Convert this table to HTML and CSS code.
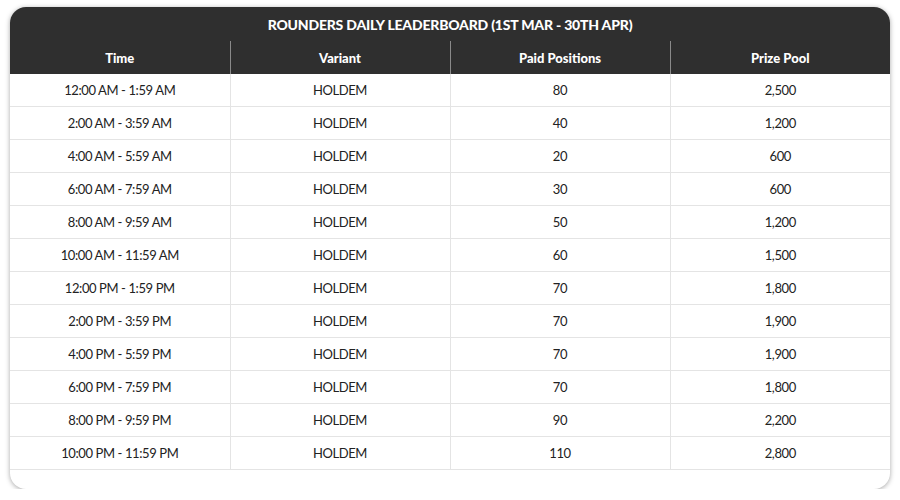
FILE: index.html
```html
<!DOCTYPE html>
<html>
<head>
<meta charset="utf-8">
<link rel="stylesheet" href="styles.css">
</head>
<body>
<div class="card">
  <table class="board">
    <thead>
      <tr class="title-row"><th colspan="4">ROUNDERS DAILY LEADERBOARD (1ST MAR - 30TH APR)</th></tr>
      <tr class="head-row"><th>Time</th><th>Variant</th><th>Paid Positions</th><th>Prize Pool</th></tr>
    </thead>
    <tbody>
      <tr><td>12:00 AM - 1:59 AM</td><td>HOLDEM</td><td>80</td><td>2,500</td></tr>
      <tr><td>2:00 AM - 3:59 AM</td><td>HOLDEM</td><td>40</td><td>1,200</td></tr>
      <tr><td>4:00 AM - 5:59 AM</td><td>HOLDEM</td><td>20</td><td>600</td></tr>
      <tr><td>6:00 AM - 7:59 AM</td><td>HOLDEM</td><td>30</td><td>600</td></tr>
      <tr><td>8:00 AM - 9:59 AM</td><td>HOLDEM</td><td>50</td><td>1,200</td></tr>
      <tr><td>10:00 AM - 11:59 AM</td><td>HOLDEM</td><td>60</td><td>1,500</td></tr>
      <tr><td>12:00 PM - 1:59 PM</td><td>HOLDEM</td><td>70</td><td>1,800</td></tr>
      <tr><td>2:00 PM - 3:59 PM</td><td>HOLDEM</td><td>70</td><td>1,900</td></tr>
      <tr><td>4:00 PM - 5:59 PM</td><td>HOLDEM</td><td>70</td><td>1,900</td></tr>
      <tr><td>6:00 PM - 7:59 PM</td><td>HOLDEM</td><td>70</td><td>1,800</td></tr>
      <tr><td>8:00 PM - 9:59 PM</td><td>HOLDEM</td><td>90</td><td>2,200</td></tr>
      <tr><td>10:00 PM - 11:59 PM</td><td>HOLDEM</td><td>110</td><td>2,800</td></tr>
    </tbody>
  </table>
</div>
</body>
</html>
```
FILE: styles.css
```css
html, body {
  margin: 0;
  padding: 0;
  background: #ffffff;
}
body {
  padding: 7px 10px 0 10px;
  font-family: Lato, "Liberation Sans", sans-serif;
}
.card {
  width: 880px;
  height: 482px;
  box-sizing: border-box;
  background: #ffffff;
  border-radius: 16px;
  overflow: hidden;
  box-shadow: 0 1px 5px rgba(0, 0, 0, 0.35);
}
.board {
  width: 100%;
  border-collapse: collapse;
  table-layout: fixed;
}
.board th {
  background: #2f2f2f;
  color: #ffffff;
  font-weight: 900;
  font-size: 13px;
  padding: 0;
}
.title-row th {
  height: 34px;
  font-size: 14px;
  letter-spacing: -0.2px;
}
.head-row th {
  height: 33px;
  border-left: 1px solid #8a8a8a;
}
.head-row th:first-child {
  border-left: none;
}
.board td {
  height: 32px;
  padding: 0;
  text-align: center;
  font-size: 13px;
  letter-spacing: -0.4px;
  color: #222222;
  border-bottom: 1px solid #e4e4e4;
  border-left: 1px solid #e4e4e4;
}
.board td:first-child {
  border-left: none;
}
```
